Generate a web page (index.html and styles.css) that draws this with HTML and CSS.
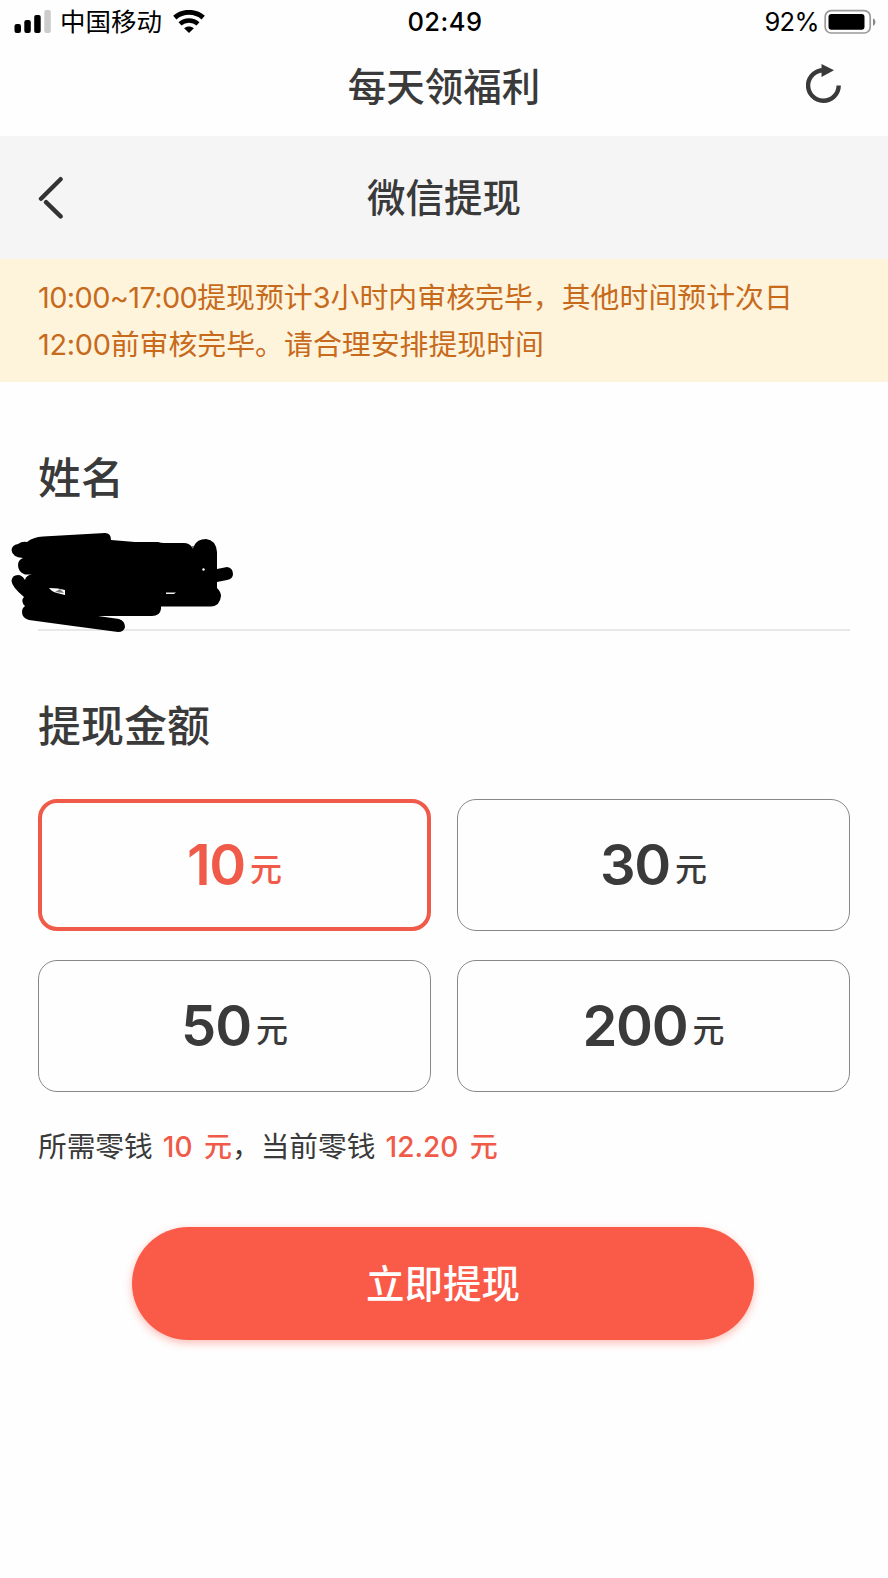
FILE: index.html
```html
<!DOCTYPE html>
<html lang="zh-CN">
<head>
    <meta charset="UTF-8">
    <meta name="viewport" content="width=device-width, initial-scale=1.0">
    <title>微信提现</title>
    <link rel="stylesheet" href="styles.css">
</head>
<body>
    <div class="status-bar">
        <div class="status-left">
            <svg class="signal" width="38" height="24" viewBox="0 0 38 24">
                <rect x="0.5" y="14" width="6.5" height="9" rx="2.2"/>
                <rect x="10.3" y="10" width="6.5" height="13" rx="2.2"/>
                <rect x="20.2" y="5" width="6.5" height="18" rx="2"/>
                <rect class="signal-off" x="30.3" y="0" width="6.5" height="23" rx="2"/>
            </svg>
            <span class="carrier">中国移动</span>
            <svg class="wifi" width="32" height="24" viewBox="0 0 32 24">
                <path d="M1.8 7.6C10 0.6 22 0.6 30.2 7.6" fill="none" stroke="#000" stroke-width="5"/>
                <path d="M7 13.8C12 9.4 20 9.4 25 13.8" fill="none" stroke="#000" stroke-width="4.4"/>
                <path d="M11.1 18.3C14 15.8 18 15.8 20.9 18.3L16 23Z"/>
            </svg>
        </div>
        <span class="clock">02:49</span>
        <div class="status-right">
            <span class="percent">92%</span>
            <svg class="battery" width="53" height="26" viewBox="0 0 53 26">
                <rect x="2.2" y="1.7" width="45" height="22.3" rx="6" fill="none" stroke="#999" stroke-width="1.7"/>
                <rect x="5.5" y="5" width="36" height="15.7" rx="3"/>
                <path d="M50 9.2C53.2 10.5 53.2 15.5 50 16.8Z" fill="#888"/>
            </svg>
        </div>
    </div>

    <header class="app-header">
        <h1 class="app-title">每天领福利</h1>
        <svg class="refresh" width="36" height="40" viewBox="0 0 36 40">
            <path d="M32.7 21.5A15.3 15.3 0 1 1 18 6.2" fill="none" stroke="#3a3a3a" stroke-width="4.4"/>
            <path d="M15.5 0L28 6.3L15.5 13Z" fill="#3a3a3a"/>
        </svg>
    </header>

    <nav class="page-nav">
        <svg class="back" width="26" height="44" viewBox="0 0 26 44">
            <path d="M22.6 3.2L3 22.8M8 26.2L22.6 40.4" fill="none" stroke="#333" stroke-width="4.4" stroke-linecap="round"/>
        </svg>
        <h2 class="page-title">微信提现</h2>
    </nav>

    <p class="notice"><span class="notice-range">10:00~17:00</span>提现预计3小时内审核完毕，其他时间预计次日<br><span class="notice-time">12:00</span>前审核完毕。请合理安排提现时间</p>

    <main class="content">
        <h3 class="section-title">姓名</h3>
        <div class="name-field">
            <!-- name scribbled out with a marker -->
            <svg class="scribble" width="224" height="102" viewBox="11 532 224 102">
                <path d="M11.5 550Q12 545 18 544Q22 541 27 542Q33 537 43 536.5L105 533Q111 533 111 540L135 542H158Q161 543 164 543H184Q189 543 192 547L194 546Q197 539 206 539Q216 540 217 552V569L227 567Q233 568 233 574Q233 579 227 580L217 582V588Q221 592 221 596Q220 606 211 606.5H161V609Q160 616 152 616H98L119 619Q125 621 125 627Q124 632 118 632L73 626L29 620Q22 618 22 612Q22 608 25 606Q20 601 24 597Q12 587 11.5 581Q12 575 18 575Q22 575 25 580Q26 575 32 574.5H25Q18 572 18 565Q18 560 23 558Q12 557 11.5 550Z"/>
                <path d="M49 588L58 588.5L65 590V595L57 593Q52 592 49 588Z" fill="#fff"/>
                <path d="M55 592L60 589L64 593Z" fill="#777"/>
                <path d="M166 592.5H176L174 594H166Z" fill="#eee"/>
                <circle cx="203.5" cy="569.5" r="1.2" fill="#fff"/>
                <path d="M191 546H194L193 549Z" fill="#777"/>
            </svg>
        </div>

        <h3 class="section-title">提现金额</h3>
        <div class="amount-grid">
            <div class="amount-card active"><span class="amount-value">10</span><span class="amount-unit">元</span></div>
            <div class="amount-card"><span class="amount-value">30</span><span class="amount-unit">元</span></div>
            <div class="amount-card"><span class="amount-value">50</span><span class="amount-unit">元</span></div>
            <div class="amount-card"><span class="amount-value">200</span><span class="amount-unit">元</span></div>
        </div>

        <p class="balance">所需零钱 <strong>10 元</strong>，当前零钱 <strong>12.20 元</strong></p>

        <button class="submit-btn" type="button">立即提现</button>
    </main>
</body>
</html>
```
FILE: styles.css
```css
:root {
    --accent-color: #fa5a48;
    --accent-dark: #f05a49;
    --text-dark: #3a3a3a;
    --notice-bg: #fef4dc;
    --notice-text: #c76a1c;
}

* {
    margin: 0;
    padding: 0;
    box-sizing: border-box;
}

body {
    min-height: 1578px;
    background-color: #fefefe;
    color: var(--text-dark);
    font-family: Inter, "Noto Sans CJK SC", sans-serif;
}

svg {
    display: block;
    flex: none;
}

/* status bar */
.status-bar {
    display: grid;
    grid-template-columns: 1fr auto 1fr;
    align-items: center;
    height: 44px;
    padding: 0 12px 0 14px;
    color: #000;
    font-size: 25.5px;
    line-height: 44px;
}

.status-left,
.status-right {
    display: flex;
    align-items: center;
}

.status-right {
    justify-content: flex-end;
    gap: 4px;
}

.signal-off {
    fill: #ccc;
}

.carrier {
    margin: 0 11px 0 8px;
}

.clock {
    font-weight: 500;
    letter-spacing: 0.5px;
}

.percent {
    letter-spacing: -0.6px;
}

/* headers */
.app-header {
    position: relative;
    display: flex;
    justify-content: center;
    height: 92px;
    line-height: 87px;
}

.app-title,
.page-title {
    font-size: 38.5px;
    font-weight: 500;
}

.refresh {
    position: absolute;
    top: 20px;
    right: 46px;
}

.page-nav {
    position: relative;
    display: flex;
    justify-content: center;
    height: 123px;
    background-color: #f5f5f5;
    line-height: 124px;
}

.back {
    position: absolute;
    top: 40px;
    left: 38px;
}

.notice {
    height: 123px;
    padding: 15px 38px 13px;
    background-color: var(--notice-bg);
    color: var(--notice-text);
    font-size: 28.9px;
    line-height: 47px;
    white-space: nowrap;
}

.notice-range {
    letter-spacing: -0.6px;
}

.notice-time {
    letter-spacing: -0.3px;
}

/* form */
.content {
    padding: 64px 38px 0;
}

.section-title {
    font-size: 43px;
    font-weight: 500;
    line-height: 64px;
}

.name-field {
    position: relative;
    height: 121px;
    margin-bottom: 63px;
    border-bottom: 2px solid #e8e8e8;
}

.scribble {
    position: absolute;
    top: 22px;
    left: -27px;
}

.amount-grid {
    display: grid;
    grid-template-columns: 1fr 1fr;
    gap: 29px 26px;
    margin-top: 41px;
}

.amount-card {
    display: flex;
    justify-content: center;
    align-items: center;
    gap: 5px;
    height: 132px;
    border: 1px solid #888;
    border-radius: 19px;
}

.amount-card.active {
    border: 4px solid var(--accent-dark);
    color: var(--accent-dark);
}

.amount-value {
    font-size: 56px;
    font-weight: 600;
    letter-spacing: -1.2px;
}

.amount-unit {
    padding-top: 4px;
    font-size: 32px;
    font-weight: 500;
}

.balance {
    margin-top: 32px;
    font-size: 28.7px;
    line-height: 46px;
    white-space: nowrap;
}

.balance strong {
    margin-left: 2px;
    color: var(--accent-dark);
    font-size: 28px;
    font-weight: 500;
    word-spacing: 4px;
}

.submit-btn {
    display: block;
    width: 622px;
    height: 113px;
    margin: 57px auto 0 94px;
    padding-bottom: 6px;
    border: none;
    border-radius: 57px;
    background-color: var(--accent-color);
    box-shadow: 0 3px 9px rgba(250, 90, 72, 0.4);
    color: #fff;
    font-family: inherit;
    font-size: 38.5px;
    font-weight: 500;
}
```
